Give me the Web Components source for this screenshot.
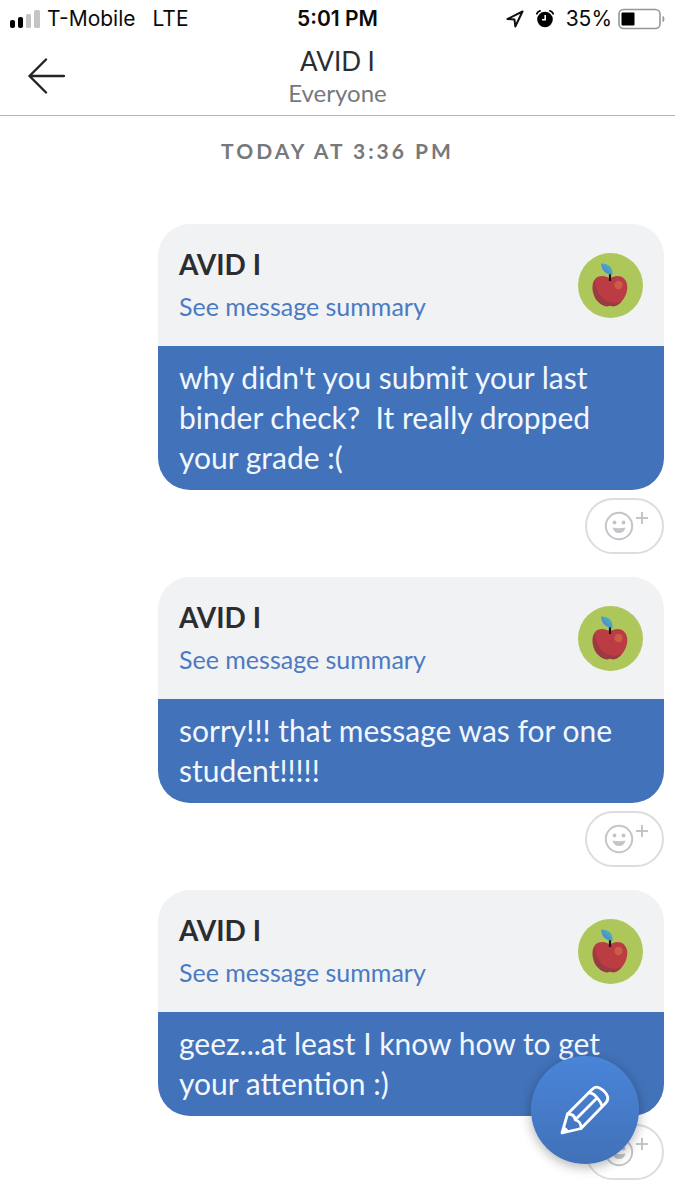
<!DOCTYPE html>
<html lang="en">
<head>
<meta charset="utf-8">
<meta name="viewport" content="width=device-width, initial-scale=1">
<title>AVID I</title>
<style>
  body { margin: 0; background: #fff; font-family: Lato, "Open Sans", sans-serif; color: #2b2d31; }
</style>
</head>
<body>
<chat-screen>
  <status-bar slot="status" carrier="T-Mobile" network="LTE" time="5:01 PM" battery="35%"></status-bar>
  <chat-header slot="header"><span>AVID I</span><span slot="audience">Everyone</span></chat-header>
  <date-divider>Today at 3:36 PM</date-divider>
  <message-card name="AVID I">why didn't you submit your last binder check?&nbsp; It really dropped your grade :(</message-card>
  <message-card name="AVID I">sorry!!! that message was for one student!!!!!</message-card>
  <message-card name="AVID I">geez...at least I know how to get your attention :)</message-card>
  <compose-button slot="action"></compose-button>
</chat-screen>

<script>
const define = (name, html) => customElements.define(name, class extends HTMLElement {
  constructor() {
    super();
    const t = document.createElement('template');
    t.innerHTML = html;
    this.attachShadow({ mode: 'open' }).append(t.content.cloneNode(true));
  }
  connectedCallback() {
    this.shadowRoot.querySelectorAll('[data-attr]').forEach(el => {
      el.textContent = this.getAttribute(el.dataset.attr);
    });
  }
});

define('chat-screen', `
<style>
  :host { display: block; min-height: 100vh; }
  main { display: flex; flex-direction: column; padding: 0 11px 20px; }
</style>
<slot name="status"></slot>
<slot name="header"></slot>
<main><slot></slot></main>
<slot name="action"></slot>`);

define('status-bar', `
<style>
  :host { display: grid; grid-template-columns: 1fr auto 1fr; align-items: center; height: 38px;
    padding: 0 10px; font: 21px/24px Inter, sans-serif; color: #0b0b0c; }
  div { display: flex; align-items: center; }
  svg { display: block; flex: none; }
  .left { gap: 7px; }
  .net { margin-left: 10px; }
  .time { font-weight: 600; }
  .right { justify-content: flex-end; gap: 12px; }
  .power { gap: 6px; }
</style>
<div class="left">
  <svg width="30" height="20" viewBox="0 0 30 20" aria-hidden="true">
    <rect x="0" y="11" width="5" height="8" rx="2" fill="#000"/><rect x="8" y="8" width="5" height="11" rx="2" fill="#000"/>
    <rect x="16" y="5" width="5" height="14" rx="1.5" fill="#c4c4c4"/><rect x="24" y="1" width="6" height="18" rx="1.5" fill="#c4c4c4"/>
  </svg>
  <span data-attr="carrier"></span><span class="net" data-attr="network"></span>
</div>
<div class="time" data-attr="time"></div>
<div class="right">
  <svg width="18" height="18" viewBox="0 0 18 18" fill="none" stroke="#111" stroke-width="2" stroke-linejoin="round" aria-hidden="true"><path d="M16.500 1.500 1.500 9l7 .5.8 7z"/></svg>
  <svg width="18" height="18" viewBox="0 0 18 18" aria-hidden="true"><circle cx="9" cy="9.500" r="7.800" fill="#000"/><path d="M9.200 5v4.800H6" fill="none" stroke="#fff" stroke-width="1.600"/><path d="M.9 3.700Q1.800 1.500 4 .9M17.100 3.700Q16.200 1.500 14 .9" fill="none" stroke="#000" stroke-width="1.800" stroke-linecap="round"/></svg>
  <div class="power"><span data-attr="battery"></span>
  <svg width="47" height="22" viewBox="0 0 47 22" aria-hidden="true"><rect x="1" y="1.5" width="41" height="19" rx="4.5" fill="#fff" stroke="#969696" stroke-width="1.6"/><rect x="3.5" y="4.5" width="13" height="13" rx="1" fill="#000"/><path d="M44.500 7.500q2 1 2 3.500t-2 3.500z" fill="#969696"/></svg></div>
</div>`);

define('chat-header', `
<style>
  :host { display: grid; grid-template-columns: 1fr auto 1fr; align-items: center; height: 75px; padding-bottom: 2px; border-bottom: 1px solid #b4b5b7; }
  button { justify-self: start; margin-left: 22px; padding: 4px 6px; border: 0; background: none; }
  svg { display: block; }
  h1, p { margin: 0; text-align: center; font-weight: 400; }
  h1 { font-size: 26px; line-height: 34px; }
  p { font-size: 24px; line-height: 30px; color: #77787b; }
</style>
<button aria-label="Back"><svg width="37" height="36" viewBox="0 0 37 36" fill="none" stroke="#222326" stroke-width="2.4" stroke-linecap="round" stroke-linejoin="round"><path d="M36 18H1.500M18 1.500 1.500 18 18 34.500"/></svg></button>
<div><h1><slot></slot></h1><p><slot name="audience"></slot></p></div>`);

define('date-divider', `
<style>
  :host { display: block; padding: 20px 0 58px; text-align: center; font-weight: 700; font-size: 21px; line-height: 30px;
    letter-spacing: 3px; text-transform: uppercase; color: #77787b; }
</style><slot></slot>`);

define('message-card', `
<style>
  :host { display: flex; flex-direction: column; align-items: flex-end; gap: 8px; margin-bottom: 23px; }
  :host(:last-of-type) { margin-bottom: 0; }
  article { width: 80%; max-width: 506px; border-radius: 32px; overflow: hidden; }
  header { display: flex; justify-content: space-between; align-items: center; height: 122px; box-sizing: border-box; padding: 0 21px; background: #f1f2f4; }
  h2 { margin: 0; font-size: 28px; line-height: 42px; font-weight: 700; color: #2b2d31; }
  a { display: block; font-size: 25px; line-height: 42px; color: #4c7ac2; text-decoration: none; }
  p { margin: 0; padding: 11px 21px 13px; font-size: 30px; line-height: 40px; color: #f2f7ff; background: #4272b9; }
</style>
<article>
  <header><div><h2 data-attr="name"></h2><a href="#summary">See message summary</a></div><apple-avatar></apple-avatar></header>
  <p><slot></slot></p>
</article>
<react-button></react-button>`);

define('apple-avatar', `
<style>:host { display: block; } svg { display: block; }</style>
<svg width="65" height="65" viewBox="0 0 65 65" role="img" aria-label="Apple">
  <defs><linearGradient id="leaf" x1="0" y1="1" x2="1" y2="0"><stop offset=".3" stop-color="#5088d5"/><stop offset=".65" stop-color="#48abc0"/></linearGradient></defs>
  <circle cx="32.500" cy="32.500" r="32.500" fill="#adc75b"/>
  <path d="M32 25.500c4-3 10-3.500 14 0 5 4.500 4 14-.5 20.500-3.500 5-8 8-11.500 7.200l-2-.8-2 .8c-3 .8-8-2-11.500-6.200-5-6.500-5.500-17-1-21.500 4-3.500 10-3 14.500 0z" fill="#bb3d43"/>
  <path d="M17 27c-3 5-2 14 1.500 20 3.500 4.200 8.500 7 11.500 6.200l2-.8 2 .8c3 .5 7-1.500 10-5.200C30 54 18 44 17 27z" fill="#983b42"/>
  <circle cx="40.500" cy="32" r="4.200" fill="#cb5c48"/>
  <path d="M32 28v-7" stroke="#171717" stroke-width="2.200"/>
  <path d="M23 10.500c7-.5 12 3.500 11.500 11-6.500.5-11-4-11.500-11z" fill="url(#leaf)"/>
</svg>`);

define('react-button', `
<style>
  :host { display: block; }
  button { display: flex; align-items: center; justify-content: center; width: 79px; height: 56px; padding: 0; border: 2px solid #dcdde0; border-radius: 28px; background: #fff; }
  svg { display: block; }
</style>
<button aria-label="Add reaction"><svg width="46" height="32" viewBox="0 0 46 32" fill="none" stroke="#c4c5c9">
  <circle cx="17" cy="16" r="13.200" stroke-width="2"/>
  <circle cx="12.500" cy="12.500" r="1.900" fill="#c4c5c9" stroke="none"/><circle cx="21.500" cy="12.500" r="1.900" fill="#c4c5c9" stroke="none"/>
  <path d="M10.500 17.500q6.500 1.500 13 0-1.500 5.500-6.500 5.500t-6.500-5.500z" fill="#c4c5c9" stroke="none"/>
  <path d="M34 8h12M40 2v12" stroke-width="2"/>
</svg></button>`);

define('compose-button', `
<style>
  :host { position: fixed; right: 36px; bottom: 36px; }
  button { display: flex; align-items: center; justify-content: center; width: 108px; height: 108px; padding: 0; border: 0; border-radius: 50%;
    background: linear-gradient(#4a85d9, #4171b8); box-shadow: 0 3px 12px rgba(0,0,0,.3); }
  svg { display: block; }
</style>
<button aria-label="New message"><svg width="52" height="52" viewBox="0 0 52 52" fill="none" stroke="#fff" stroke-width="2.800" stroke-linejoin="round" stroke-linecap="round">
  <path d="M3 49 8.500 30 33 5.500c2-2.300 4.500-3 7-1.800 4 1.800 7 4.800 8.500 8.500.8 2.500.4 4.500-1.500 6.500L22 44.500z"/>
  <path d="M8.500 30c5 0 7.500 2 7.700 6 3.800.8 6 3.500 5.800 8.500M16.500 35.500 36.500 15.500M30 8.500c3 .5 5.500 2 7.500 4.500s4.500 5 5.500 9"/>
  <path d="M3 49 5 42.500l5 4.500z" fill="#fff" stroke-width="1"/>
</svg></button>`);
</script>
</body>
</html>
